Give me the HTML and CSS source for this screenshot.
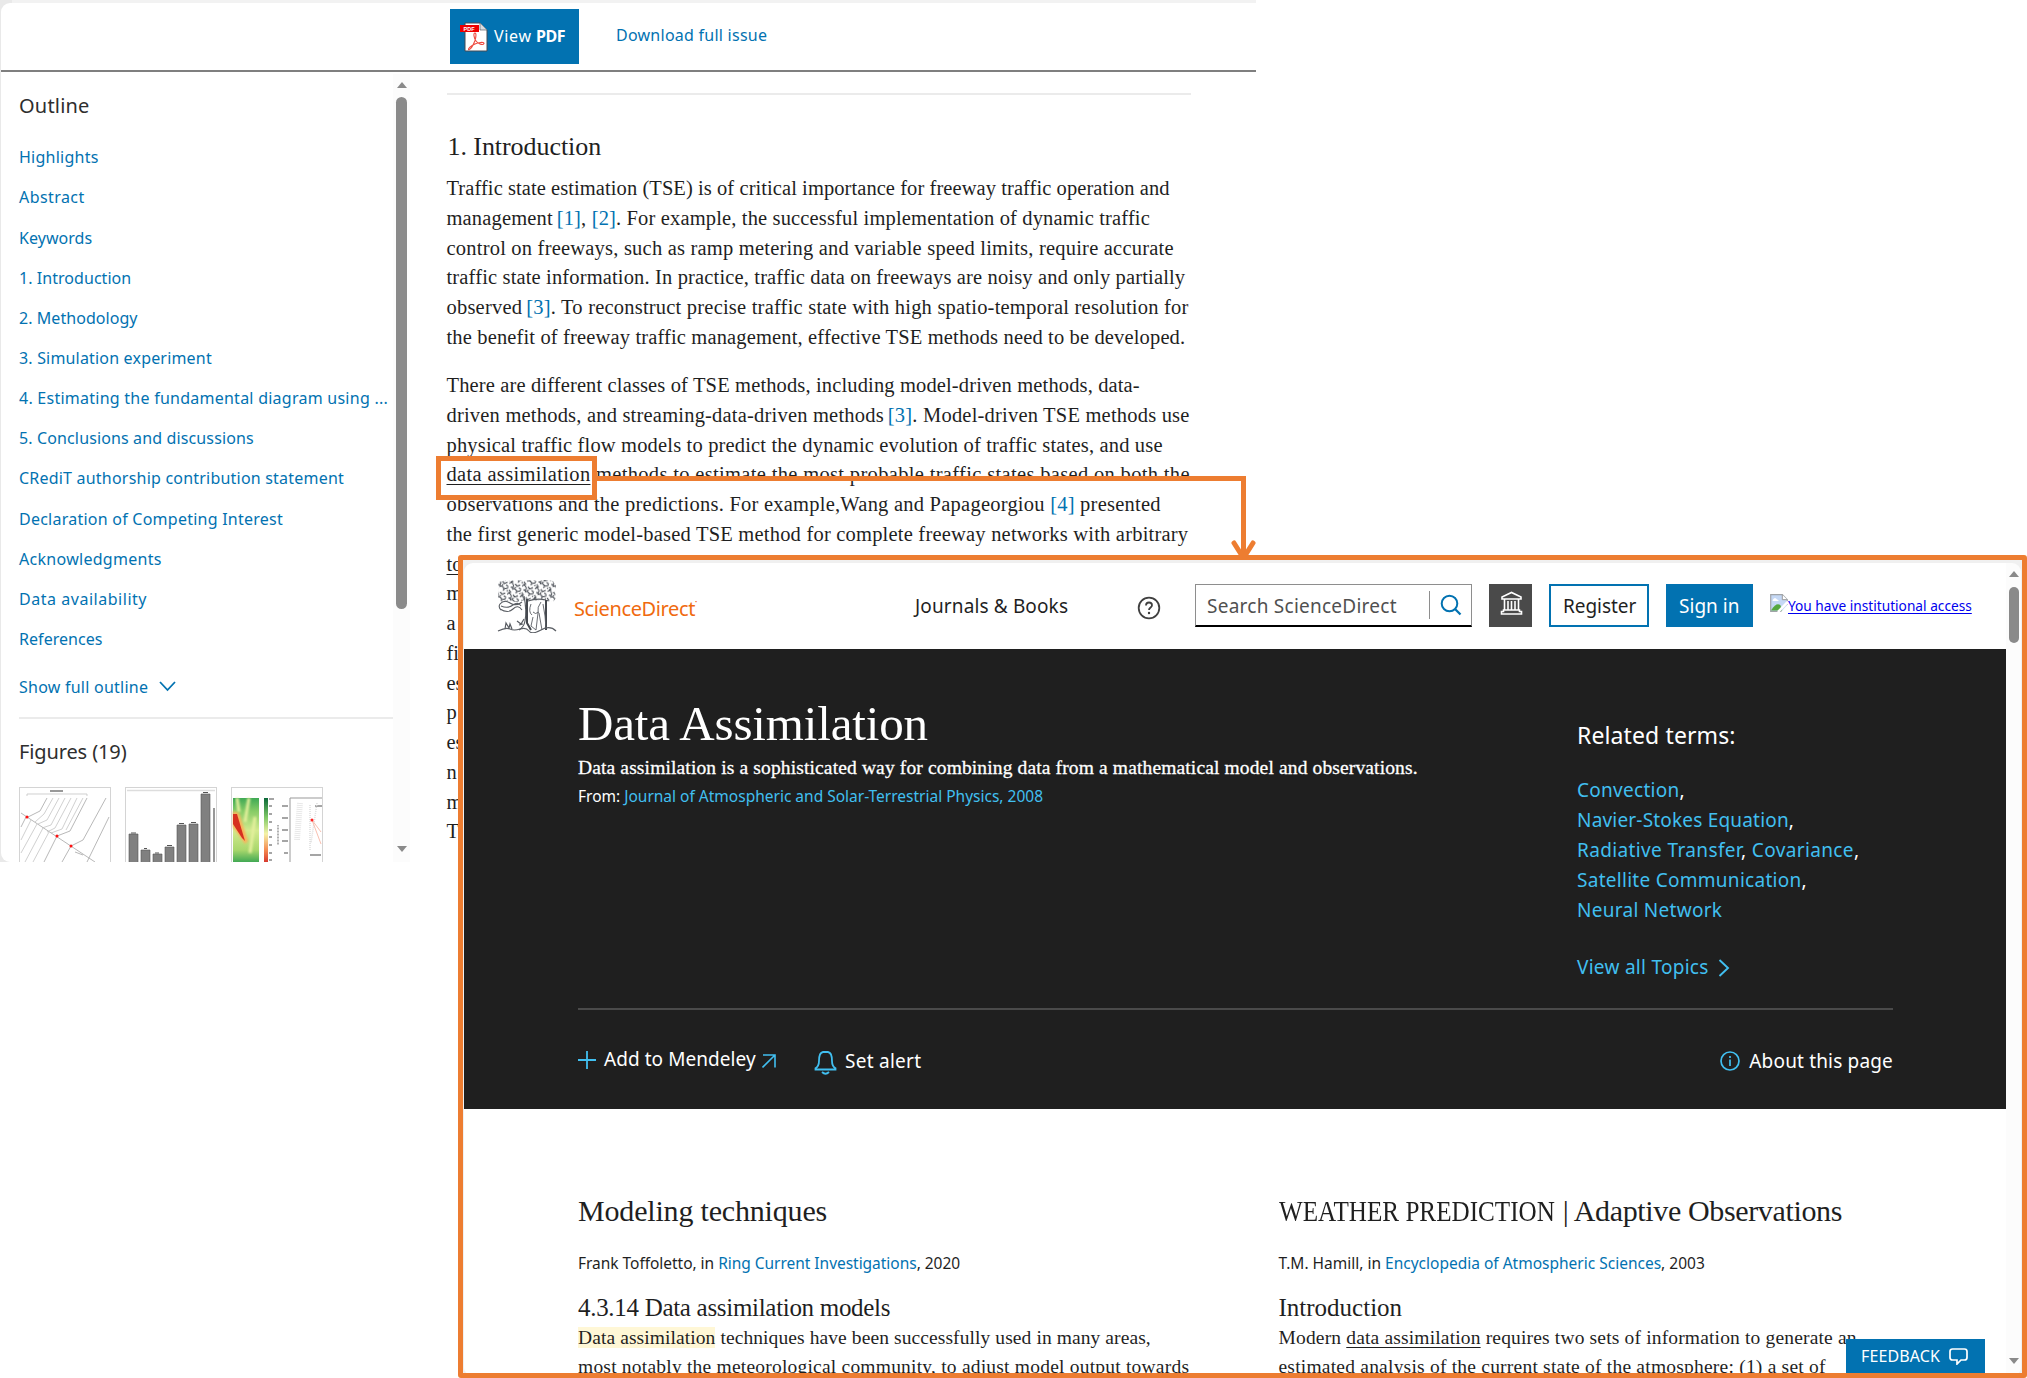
FILE: index.html
```html
<!DOCTYPE html>
<html lang="en">
<head>
<meta charset="utf-8">
<title>Data Assimilation - ScienceDirect Topics</title>
<link rel="stylesheet" href="styles.css">
</head>
<body>
<div class="stage">
  <section class="reader">
    <header class="reader-bar">
      <a class="pdf-button">
        <svg class="pdf-icon" width="30" height="30" viewBox="0 0 30 30"><path d="M6 1h15l7 7v21H6z" fill="#fff" stroke="#444b55" stroke-width="1"/><path d="M21 1v7h7" fill="#d9dde2" stroke="#444b55" stroke-width=".6"/><rect x="1" y="3" width="19" height="7" fill="#e00"/><text x="4.500" y="8.600" class="pdf-tag">PDF</text><path d="M16 11c-2 0-1 5 1 8 2 3 7 4.500 8 2.500 0-2-6-1-9 .5-4 2-7 4-6.500 5.500 2 1 5-5 6.500-9 1-3 1.500-7.500 0-7.500z" fill="none" stroke="#ee4b40" stroke-width="1.100"/></svg>
        <span class="pdf-view">View</span><b>PDF</b>
      </a>
      <a class="download">Download full issue</a>
    </header>
    <div class="reader-body">
      <nav class="outline">
        <h2>Outline</h2>
        <ul>
          <li>Highlights</li><li>Abstract</li><li>Keywords</li><li>1. Introduction</li><li>2. Methodology</li><li>3. Simulation experiment</li><li>4. Estimating the fundamental diagram using ...</li><li>5. Conclusions and discussions</li><li>CRediT authorship contribution statement</li><li>Declaration of Competing Interest</li><li>Acknowledgments</li><li>Data availability</li><li>References</li>
        </ul>
        <a class="show-full">Show full outline <svg width="17" height="11" viewBox="0 0 17 11"><path d="M1 1l7.500 8L16 1" fill="none" stroke="#0272b1" stroke-width="1.800"/></svg></a>
        <h2 class="figures-title">Figures (19)</h2>
        <div class="thumbs">
          <svg viewBox="0 0 92 76" width="92" height="76"><rect x=".5" y=".5" width="91" height="90" fill="#fff" stroke="#d4d4d4"/><path d="M8 9V7h60v2" fill="none" stroke="#bbb" stroke-width=".7"/><path d="M31 4h13" stroke="#777" stroke-width="1.500"/><g fill="none" stroke="#999" stroke-width=".7"><path d="M28 11l-7 13-12 6M68 11L51 44 38 49 25 75M87 11L64 53 52 59 43 75M90 30L68 75M2 26l6 4L76 75M2 40l5-10"/><path d="M34 11l-9 16-9 8M40 11L28 33l-9 4M46 11L32 38l-9 3M52 11L36 41l-8 4M58 11L43 42l-11 4M64 11L47 43M12 33L2 53M18 37L2 66M24 41L6 75M30 45L14 75" stroke="#bbb"/><path d="M56 65l8 3"/></g><g fill="#f11"><circle cx="8" cy="30" r="1.500"/><circle cx="38" cy="49" r="1.500"/><circle cx="52" cy="59" r="1.500"/></g></svg>
          <svg viewBox="0 0 92 76" width="92" height="76"><rect x=".5" y=".5" width="91" height="90" fill="#fff" stroke="#d4d4d4"/><path d="M2 3.500h88" stroke="#ddd" stroke-width="1.500"/><g fill="#808080" stroke="#555" stroke-width=".6"><path d="M4 47h9v30H4zM16 63h9v14h-9zM28 67h9v10h-9zM40 60h9v17h-9zM52 38h9v39h-9zM64 37h9v40h-9zM76 7h9v70h-9z"/></g><path d="M6 46h5M19 61.500h3M30 66h4M42 58.500h5M54 36.500h5M66 35.500h5M78 5.500h5M89 21v55" stroke="#555" stroke-width="1.200"/></svg>
          <svg viewBox="0 0 92 76" width="92" height="76"><defs><linearGradient id="scale" x1="0" y1="0" x2="0" y2="1"><stop offset="0" stop-color="#0a6838"/><stop offset=".3" stop-color="#7fc866"/><stop offset=".55" stop-color="#f5f3a8"/><stop offset=".8" stop-color="#f58a50"/><stop offset="1" stop-color="#d4322b"/></linearGradient><linearGradient id="field" x1="0" y1="0" x2="0" y2="1"><stop offset="0" stop-color="#3fa955"/><stop offset=".2" stop-color="#86cb66"/><stop offset=".5" stop-color="#d3ea8e"/><stop offset=".8" stop-color="#a9d76c"/><stop offset="1" stop-color="#39a552"/></linearGradient><filter id="soft"><feGaussianBlur stdDeviation="1"/></filter></defs><rect x=".5" y=".5" width="91" height="90" fill="#fff" stroke="#d4d4d4"/><rect x="2" y="11" width="26" height="65" fill="url(#field)"/><path d="M6 11l2 14M18 11l-4 24M24 30l-5 36" stroke="#e4f09c" stroke-width="3" filter="url(#soft)"/><path d="M2 24l6 2 9 28-3 3L2 40z" fill="#f9b45c" filter="url(#soft)"/><path d="M2 27h4l8 27-3-3-9-14z" fill="#d6301f"/><rect x="33" y="11" width="4" height="65" fill="url(#scale)"/><path d="M38 12h5M38 19h3M38 27h3M38 35h3M38 43h3M38 50h3M38 58h3M38 66h3M38 73h3M51 19h6M51 31h6M51 43h6M51 54h6M53 66h4M84 19h7M79 68h11" stroke="#888" stroke-width="1.500"/><path d="M47 38v20" stroke="#999" stroke-width="1.500" stroke-dasharray="1 .5"/><path d="M59 76V11h32" fill="none" stroke="#999"/><path d="M69 16l-3 37" stroke="#e8e8e8" stroke-width="6" stroke-dasharray="1 1"/><path d="M79 18v46M86 16l-6 40" stroke="#ddd" stroke-width="1.500" stroke-dasharray="1 1"/><path d="M81 33l9 24M81 33l9 12" stroke="#f9bfb0"/><circle cx="81" cy="33" r="1.500" fill="#f22"/></svg>
        </div>
      </nav>
      <div class="side-scroll"><i class="up"></i><i class="thumb"></i><i class="down"></i></div>
      <article class="paper">
        <h2>1. Introduction</h2>
        <p class="intro"><span>Traffic state estimation (TSE) is of critical importance for freeway traffic operation and</span><span>management<a class="cite">[1]</a>, <a>[2]</a>. For example, the successful implementation of dynamic traffic</span><span>control on freeways, such as ramp metering and variable speed limits, require accurate</span><span>traffic state information. In practice, traffic data on freeways are noisy and only partially</span><span>observed<a class="cite">[3]</a>. To reconstruct precise traffic state with high spatio-temporal resolution for</span><span>the benefit of freeway traffic management, effective TSE methods need to be developed.</span></p>
        <p class="classes"><span>There are different classes of TSE methods, including model-driven methods, data-</span><span>driven methods, and streaming-data-driven methods<a class="cite">[3]</a>. Model-driven TSE methods use</span><span>physical traffic flow models to predict the dynamic evolution of traffic states, and use</span><span><u>data assimilation</u> methods to estimate the most probable traffic states based on both the</span><span>observations and the predictions. For example,Wang and Papageorgiou <a>[4]</a> presented</span><span>the first generic model-based TSE method for complete freeway networks with arbitrary</span><span><u>to</u></span><span>m</span><span>a</span><span>fi</span><span>es</span><span>p</span><span>es</span><span>n</span><span>m</span><span>T</span></p>
      </article>
    </div>
  </section>

  <div class="callout"></div>
  <svg class="connector" width="660" height="100" viewBox="0 0 660 100"><path d="M0 8.500H646.500V88" fill="none" stroke="#ed7d31" stroke-width="5"/><path d="M637 73L646.500 88l9.500-15" fill="none" stroke="#ed7d31" stroke-width="5" stroke-linecap="round"/></svg>

  <section class="topic">
    <div class="topic-page">
      <header class="site-bar">
        <svg class="tree" width="60" height="54" viewBox="0 0 60 54" fill="none" stroke="#5a5e64"><defs><pattern id="leaves" width="13" height="11" patternUnits="userSpaceOnUse" patternTransform="rotate(12)"><path d="M0 2q2-3 4 0t-2 3M6 1l2 2 3-2M10 4q3 0 2 3l-3 1M4 7q2-2 4 0t0 3M1 8l2 2-2 1M7 4l-1 2M12 9l1 1M3 5l2 1" fill="none" stroke="#4a4f56" stroke-width="1.100"/></pattern></defs><path d="M2 3l6-2 5 1 6-1 7 1 8-1 7 1 7-1 8 1 3 5-1 6 1 6-3 4-7-1-6-1-8 1-7-1-8 2-8-1-7 2-4-6 1-7-1-5z" fill="url(#leaves)" stroke="none"/><path d="M3 25q4-5 10-1t12-1M3 30q8 5 13 0t9 1M4 27q7 3 12-1t8 1M3 25q-2 3 1 6" stroke-width="1.100"/><path d="M27 17q3 15 1 25-1 6-6 9M31 22q9-3 18-1" stroke-width="1.200"/><path d="M30 20v24l4 7M49 21v30" stroke="#44484e" stroke-width="2"/><path d="M34 25q-3 8 1 11M36 33q2 3 6 0M44 23q-4 5-3 11l-2 17M46 25l2 12 1 13M36 38l-2 9 5 4M42 34l3 17" stroke-width=".9"/><path d="M1 52q8-4 12-2t10 0 9 2 12-1 15 1M8 50l1-6 3 5 1-4 2 5M20 42l4 3 3-5M22 46l4-1" stroke-width="1.200"/></svg>
        <span class="brand">ScienceDirect<sup>•</sup></span>
        <a class="journals">Journals &amp; Books</a>
        <svg class="help" width="24" height="24" viewBox="0 0 24 24" fill="none" stroke="#404040" stroke-width="1.800"><circle cx="12" cy="12" r="10.300"/><path d="M9 9.500c0-1.800 1.300-3 3-3s3 1 3 2.700c0 2.200-3 2.300-3 4.800"/><circle cx="12" cy="17" r=".6" fill="#404040" stroke-width="1.200"/></svg>
        <div class="search"><span>Search ScienceDirect</span><i></i><svg width="22" height="22" viewBox="0 0 22 22" fill="none" stroke="#0272b1" stroke-width="2"><circle cx="9.500" cy="9.500" r="7.800"/><path d="M15 15l5.500 5.500" stroke-width="2.300"/></svg></div>
        <div class="institution"><svg width="23" height="24" viewBox="0 0 23 24" fill="none" stroke="#fff" stroke-width="1.600"><path d="M2 8V6l9.500-4.500L21 6v2zM3.500 19h16v1.500h2V23h-20v-2.500h2zM4.500 8v11M18.500 8v11M8 10v9M11.500 10v9M15 10v9"/></svg></div>
        <a class="register">Register</a>
        <a class="signin">Sign in</a>
        <a class="access"><svg width="18" height="18" viewBox="0 0 18 18"><path d="M.7 .7h11.600l5 5v11.600H.7z" fill="#c5d8f5" stroke="#a0a4a8" stroke-width="1.200"/><path d="M3 5.500q2-3 4 0 2 0 1.500 1.500H2.500z" fill="#fff"/><path d="M1.300 16q5-8 9-5l2 5.500H1.300z" fill="#55a83f"/><path d="M12.300 .7v5h5" fill="#fff" stroke="#999"/><path d="M18 7.500L8 18" stroke="#fff" stroke-width="2.500"/><path d="M18 10v8h-7z" fill="#fff"/></svg><span>You have institutional access</span></a>
      </header>
      <div class="hero">
        <div class="hero-top">
          <div class="summary">
            <h1>Data Assimilation</h1>
            <p class="definition">Data assimilation is a sophisticated way for combining data from a mathematical model and observations.</p>
            <p class="source">From: <a>Journal of Atmospheric and Solar-Terrestrial Physics, 2008</a></p>
          </div>
          <aside class="related">
            <h2>Related terms:</h2>
            <p><span><a>Convection</a>,</span><span><a>Navier-Stokes Equation</a>,</span><span><a>Radiative Transfer</a>, <a>Covariance</a>,</span><span><a>Satellite Communication</a>,</span><span><a>Neural Network</a></span></p>
            <a class="all-topics">View all Topics<svg width="12" height="18" viewBox="0 0 12 18"><path d="M1.500 1l8.500 8-8.500 8" fill="none" stroke="#41bff0" stroke-width="1.900"/></svg></a>
          </aside>
        </div>
        <div class="actions">
          <svg class="plus" width="18" height="18" viewBox="0 0 18 18"><path d="M9 0v18M0 9h18" stroke="#41bff0" stroke-width="1.800"/></svg>
          <a class="mendeley">Add to Mendeley</a>
          <svg class="out" width="14" height="14" viewBox="0 0 14 14"><path d="M.5 13.500L13 1M1 1h12v12.500" fill="none" stroke="#41bff0" stroke-width="1.600"/></svg>
          <svg class="bell" width="23" height="24" viewBox="0 0 23 24" fill="none" stroke="#41bff0" stroke-width="1.800"><path d="M1.500 18.500h20v-1.200c-3-1.800-3.500-4-3.500-7.300 0-5-1-8.500-4-9h-5C6 1.500 5 5 5 10c0 3.300-.5 5.500-3.500 7.300z"/><path d="M8 21q3.500 3.500 7 0"/></svg>
          <a class="alert">Set alert</a>
          <svg class="info" width="20" height="20" viewBox="0 0 20 20" fill="none" stroke="#41bff0" stroke-width="1.700"><circle cx="10" cy="10" r="9"/><path d="M10 8.500V15M10 5v2"/></svg>
          <a class="about">About this page</a>
        </div>
      </div>
      <div class="chapters">
        <article>
          <h2 class="modeling">Modeling techniques</h2>
          <p class="byline frank">Frank Toffoletto, in <a>Ring Current Investigations</a>, 2020</p>
          <h3 class="models">4.3.14 Data assimilation models</h3>
          <p class="extract techniques"><span><mark>Data assimilation</mark> techniques have been successfully used in many areas,</span><span>most notably the meteorological community, to adjust model output towards</span></p>
        </article>
        <article>
          <h2 class="weather"><span>WEATHER PREDICTION</span> | Adaptive Observations</h2>
          <p class="byline">T.M. Hamill, in <a>Encyclopedia of Atmospheric Sciences</a>, 2003</p>
          <h3>Introduction</h3>
          <p class="extract modern"><span>Modern <u>data assimilation</u> requires two sets of information to generate an</span><span>estimated analysis of the current state of the atmosphere: (1) a set of</span></p>
        </article>
      </div>
    </div>
    <div class="topic-scroll"><i class="up"></i><i class="thumb"></i><i class="down"></i></div>
    <a class="feedback">FEEDBACK<svg width="19" height="17" viewBox="0 0 19 17"><path d="M3.500 1h12Q18 1 18 3.500v6Q18 12 15.500 12H12l-4 4v-4H3.500Q1 12 1 9.500v-6Q1 1 3.500 1z" fill="none" stroke="#fff" stroke-width="1.700"/></svg></a>
  </section>
</div>
</body>
</html>
```
FILE: styles.css
```css
*{box-sizing:border-box}
body{margin:0;background:#fff;font-family:"Noto Sans","Open Sans",sans-serif;color:#1f1f1f}
h1,h2,h3,p,ul{margin:0;padding:0;font-weight:400}
ul{list-style:none}
svg{display:block;flex:none}
a{color:#0272b1;text-decoration:none}
i{display:block}
.stage{position:relative;width:2027px;height:1378px;overflow:hidden;background:#fff}

/* article reader */
.reader{width:1256px;height:862px;padding:3px 0 0 1px;background:linear-gradient(90deg,#e9e9e9 12px,#f2f2f2 12px);overflow:hidden}
.reader-bar{display:flex;height:69px;padding:6px 0 0 449px;background:#fff;border-bottom:2px solid #7f7f7f;border-top-left-radius:9px}
.pdf-button{display:flex;align-items:center;width:129px;height:55px;padding-left:9px;background:#0272b1;color:#fff;font-size:16px}
.pdf-tag{font:bold 5.5px "Liberation Sans",sans-serif;fill:#fff}
.pdf-view,.pdf-button b{line-height:20px;padding-bottom:2px}
.pdf-view{width:42px;margin-left:5px;letter-spacing:.66px}
.pdf-button b{font-size:16px;letter-spacing:-.4px}
.download{margin-left:37px;line-height:52px;font-size:16px;letter-spacing:.25px}
.reader-body{display:flex;height:790px;background:#fff;border-bottom-left-radius:9px}
.outline{width:392px;padding:14px 0 0 18px}
.outline h2{height:40px;line-height:40px;font-size:20px;letter-spacing:.2px;color:#2e2e2e}
.outline ul{margin-top:11.3px}
.outline li{height:40.15px;line-height:40.15px;font-size:16px;white-space:nowrap;color:#0272b1;letter-spacing:.05px}
.outline li:nth-child(1){letter-spacing:.25px}
.outline li:nth-child(2){letter-spacing:.42px}
.outline li:nth-child(6){letter-spacing:.18px}
.outline li:nth-child(7){letter-spacing:.25px}
.outline li:nth-child(8){letter-spacing:.13px}
.outline li:nth-child(9){letter-spacing:.21px}
.outline li:nth-child(10){letter-spacing:.24px}
.outline li:nth-child(11){letter-spacing:.29px}
.outline li:nth-child(12){letter-spacing:.53px}
.show-full{display:flex;align-items:center;gap:11px;box-sizing:content-box;height:40px;padding-bottom:10px;margin-top:7.7px;border-bottom:2px solid #ebebeb;font-size:16px;line-height:40px;letter-spacing:.24px}
.outline .figures-title{margin-top:13px;letter-spacing:-.12px}
.thumbs{display:flex;gap:14px;margin-top:15px}
.side-scroll{display:flex;flex-direction:column;align-items:center;width:17px;padding-top:8px;margin-top:2px;background:#fcfcfc}
.up,.down{width:0;height:0;border:5px solid transparent;border-top:0;border-bottom:6px solid #8a8a8a}
.down{border-top:6px solid #8a8a8a;border-bottom:0}
.thumb{width:11px;height:512px;margin-top:9px;border-radius:6px;background:#8a8a8a}
.side-scroll .down{margin-top:237px}
.paper{width:744px;margin:21px 0 0 36.5px;border-top:2px solid #ebebeb;font-family:"Liberation Serif",serif}
.paper h2{height:40px;margin-top:32px;line-height:40px;font-size:26px;letter-spacing:-.06px;padding-left:1px}
.paper p{margin-top:7px;font-size:20.5px}
.paper .classes{margin-top:18.5px}
.paper p span{display:block;height:29.75px;line-height:29.75px;white-space:nowrap}
.paper u,.extract u{text-decoration-thickness:1px;text-underline-offset:3px}
.cite{margin-left:4px}
.intro span:nth-child(1){letter-spacing:.07px}
.intro span:nth-child(2){letter-spacing:.15px}
.intro span:nth-child(3){letter-spacing:.209px}
.intro span:nth-child(4){letter-spacing:.148px}
.intro span:nth-child(5){letter-spacing:.21px}
.intro span:nth-child(6){letter-spacing:.145px}
.classes span:nth-child(1){letter-spacing:.135px}
.classes span:nth-child(2){letter-spacing:.2px}
.classes span:nth-child(3){letter-spacing:.164px}
.classes span:nth-child(4){letter-spacing:.332px}
.classes span:nth-child(5){letter-spacing:.233px}
.classes span:nth-child(6){letter-spacing:.206px}

/* annotation marks laid over the article */
.callout{position:absolute;left:436px;top:456px;width:161px;height:44px;border:5px solid #ed7d31}
.connector{position:absolute;left:597px;top:470px}

/* topic window laid over the article */
.topic{position:absolute;left:458px;top:555px;display:flex;width:1569px;height:823px;padding:3px 1px 0 1px;border:5px solid #ed7d31;border-radius:3px;background:#f0f0f0;overflow:hidden}
.topic-page{width:1542px;height:811px;background:#fff;border-top-left-radius:9px;border-bottom-left-radius:6px;overflow:hidden}
.site-bar{display:flex;align-items:flex-start;height:86px;padding:21px 0 0 34px;font-size:19px;line-height:44px;white-space:nowrap}
.tree{margin:-5px 0 0 -1px}
.brand{width:340px;margin-left:17px;padding-top:3px;font-size:20px;letter-spacing:-.38px;color:#f06a0f}
.brand sup{font-size:6px;line-height:0;vertical-align:12px}
.journals{width:155px;margin-left:1px;letter-spacing:.13px}
.site-bar .journals{color:#1f1f1f}
.help{margin:12px 0 0 67px}
.search{display:flex;width:277px;height:43px;margin-left:34px;padding-left:11px;border:1px solid #8e8e8e;border-bottom:2px solid #000;line-height:42px;letter-spacing:.25px;color:#505050}
.search span{width:222px}
.search i{width:1px;height:28px;margin-top:6px;background:#8e8e8e}
.search svg{margin:9px 0 0 10px}
.institution{width:43px;height:43px;margin-left:17px;padding:7px 0 0 11px;background:#4a4a4a}
.register{width:100px;height:43px;margin-left:17px;padding-left:12px;border:2px solid #0272b1;line-height:40px;letter-spacing:-.05px}
.site-bar .register{color:#1f1f1f}
.signin{width:87px;height:43px;margin-left:17px;padding-left:13px;background:#0272b1;letter-spacing:.03px}
.site-bar .signin{color:#fff}
.access{display:flex;margin-left:17px;font-size:13.7px}
.site-bar .access{color:#00e}
.access svg{margin-top:10px}
.access span{line-height:43px;text-decoration:underline;text-underline-offset:2px}
.hero{height:460px;padding:0 113px 0 114px;background:#1f1f1f;color:#fff}
.hero a{color:#41bff0}
.hero-top{display:flex;height:361px;border-bottom:2px solid #4a4a4a}
.summary{width:999px;padding-top:45px}
.summary h1{height:60px;font:49px/60px "Liberation Serif",serif;letter-spacing:-.15px}
.definition{height:28px;font:19.5px/28px "Liberation Serif",serif;letter-spacing:.135px;-webkit-text-stroke:.3px #fff}
.source{font-size:15.5px;line-height:28px}
.related{padding-top:66px;font-size:19px;line-height:30.2px;letter-spacing:.28px}
.related h2{height:40px;font-size:23px;line-height:40px;letter-spacing:.12px}
.related p{margin-top:19.5px}
.related p span{display:block}
.related p span:nth-child(2){letter-spacing:.19px}
.related p span:nth-child(3){letter-spacing:.367px}
.all-topics{display:flex;align-items:center;gap:9px;margin-top:26.5px}
.all-topics svg{margin-top:2px}
.actions{display:flex;padding-top:29px;font-size:19px;line-height:40px}
.hero .actions a{color:#fff}
.plus{margin-top:12px}
.mendeley{width:152px;margin-left:8px;letter-spacing:.06px}
.out{margin:15px 0 0 6px}
.bell{margin:12px 0 0 38px}
.alert{margin:2px 0 0 8px;letter-spacing:.26px}
.info{margin:12px 0 0 auto}
.about{margin:2px 0 0 9px;letter-spacing:.17px}
.chapters{display:flex;padding:82px 0 0 114px;white-space:nowrap}
.chapters article{width:700.5px}
.chapters h2{height:40px;font:30px/40px "Liberation Serif",serif;letter-spacing:-.18px}
.weather span{display:inline-block;width:277px;transform:scaleX(.838);transform-origin:left;letter-spacing:0}
.chapters .weather{letter-spacing:-.36px}
.byline{height:30px;margin-top:17px;font-size:15.5px;line-height:30px}
.frank{letter-spacing:-.03px}
.chapters h3{height:34px;margin-top:13px;font:25px/34px "Liberation Serif",serif}
.chapters .models{letter-spacing:-.3px}
.extract{margin-top:-1px;font:19.5px/28.7px "Liberation Serif",serif}
.extract span{display:block}
.extract mark{background:#fff7d6;color:inherit}
.techniques span:nth-child(1){letter-spacing:.09px}
.techniques span:nth-child(2){letter-spacing:.214px}
.modern span:nth-child(1){letter-spacing:.163px}
.modern span:nth-child(2){letter-spacing:.218px}
.chapters .extract{margin-top:-1px}
.topic-scroll{display:flex;flex-direction:column;align-items:center;width:15px;height:811px;padding-top:8px;background:#fcfcfc;border-radius:0 9px 6px 0}
.topic-scroll .thumb{width:10px;height:56px;margin-top:10px}
.topic-scroll .down{margin-top:715px}
.feedback{position:absolute;right:37px;bottom:0;display:flex;gap:9px;width:139px;height:34px;padding-left:15px;background:#0272b1;font-size:16px;line-height:35px;letter-spacing:.13px}
.topic .feedback{color:#fff}
.feedback svg{margin-top:9px}
```
